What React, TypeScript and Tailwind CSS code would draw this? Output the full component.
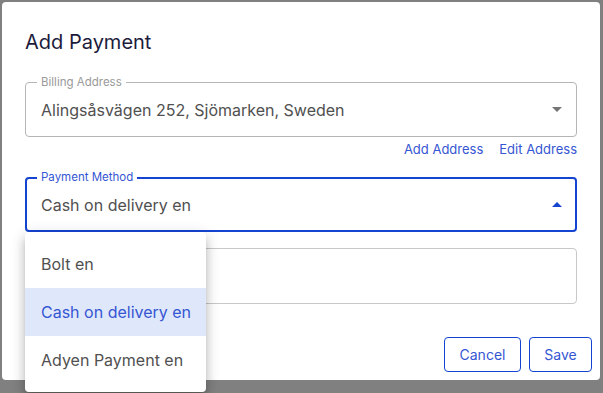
import React from "react";

const Arrow = ({ up, color }: { up?: boolean; color: string }) => (
  <svg width="10" height="5" viewBox="0 0 10 5" className="shrink-0">
    {up ? <path d="M0 5 L5 0 L10 5 Z" fill={color} /> : <path d="M0 0 L5 5 L10 0 Z" fill={color} />}
  </svg>
);

export default function App() {
  return (
    <div
      className="relative w-[603px] h-[393px] bg-[#808080] pt-[2px] pl-[2px] overflow-hidden"
      style={{ fontFamily: "Inter, 'Noto Sans', sans-serif" }}
    >
      <div className="w-[598px] h-[378px] bg-white rounded-[4px] flex flex-col">
        <div className="pl-[23px] pr-[23px] pt-[26px] flex flex-col">
          <h1 className="text-[20px] leading-[28px] text-[#1c1b3c] font-normal">Add Payment</h1>

          {/* Billing Address */}
          <div className="relative mt-[26px] h-[55px] rounded-[4px] border border-[#b5b5b5] flex items-center pl-[15px] pr-[14px]">
            <span className="absolute left-[11px] top-[-8px] px-[4px] bg-white text-[11.5px] leading-[14px] text-[#9a9a9a]">
              Billing Address
            </span>
            <span className="flex-1 text-[16px] text-[#505050]">Alingsåsvägen 252, Sjömarken, Sweden</span>
            <Arrow color="#757575" />
          </div>

          <div className="flex justify-end gap-[16px] mt-[3px] h-[20px] items-center text-[13px] text-[#3556d3]">
            <span>Add Address</span>
            <span>Edit Address</span>
          </div>

          {/* Payment Method */}
          <div className="relative mt-[17px] h-[55px] rounded-[4px] border-2 border-[#1444d0] flex items-center pl-[14px] pr-[13px]">
            <span className="absolute left-[10px] top-[-9px] px-[4px] bg-white text-[11.5px] leading-[14px] text-[#3556d3]">
              Payment Method
            </span>
            <span className="flex-1 text-[16px] text-[#505050]">Cash on delivery en</span>
            <Arrow up color="#1444d0" />
          </div>

          {/* Third field */}
          <div className="mt-[16px] h-[56px] rounded-[4px] border border-[#c8c8c8]" />
        </div>

        <div className="flex justify-end gap-[8px] mt-auto p-[8px]">
          <button className="w-[77px] h-[35px] rounded-[4px] border border-[#1444d0] text-[14px] text-[#3556d3]">
            Cancel
          </button>
          <button className="w-[63px] h-[35px] rounded-[4px] border border-[#1444d0] text-[14px] text-[#3556d3]">
            Save
          </button>
        </div>
      </div>

      {/* Dropdown menu */}
      <div className="absolute left-[25px] top-[232px] w-[181px] bg-white rounded-[4px] py-[8px] shadow-[0_5px_5px_-3px_rgba(0,0,0,0.2),0_8px_10px_1px_rgba(0,0,0,0.14),0_3px_14px_2px_rgba(0,0,0,0.12)]">
        <div className="h-[48px] flex items-center pl-[16px] text-[16px] text-[#505050]">Bolt en</div>
        <div className="h-[48px] flex items-center pl-[16px] text-[16px] text-[#3556d3] bg-[#dfe7fb]">Cash on delivery en</div>
        <div className="h-[48px] flex items-center pl-[16px] text-[16px] text-[#505050]">Adyen Payment en</div>
      </div>
    </div>
  );
}
